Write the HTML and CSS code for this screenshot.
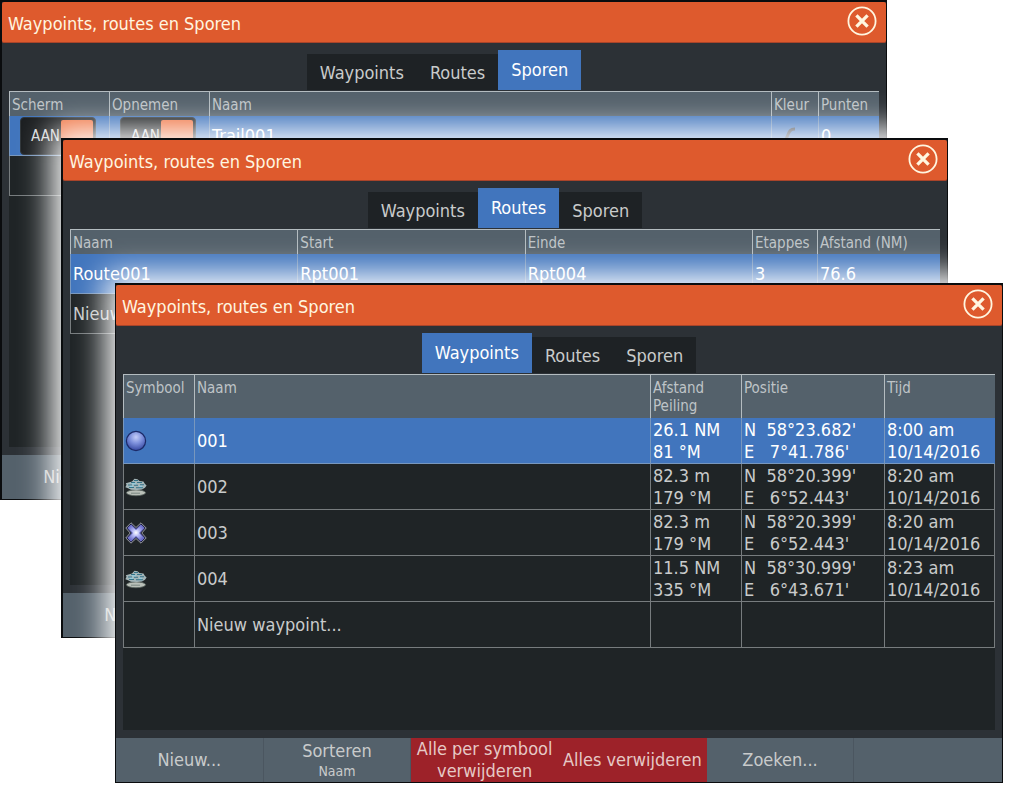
FILE: index.html
```html
<!DOCTYPE html>
<html lang="nl">
<head>
<meta charset="utf-8">
<title>Waypoints, routes en Sporen</title>
<link rel="stylesheet" href="styles.css">
</head>
<body>
<svg class="defs" aria-hidden="true">
  <defs>
    <radialGradient id="ball" cx="50%" cy="30%" r="65%">
      <stop offset="0" stop-color="#c3cdf8"/><stop offset="0.5" stop-color="#7d90dc"/><stop offset="1" stop-color="#3f51a8"/>
    </radialGradient>
    <radialGradient id="cross" cx="50%" cy="48%" r="60%">
      <stop offset="0" stop-color="#ffffff"/><stop offset="0.35" stop-color="#b9bdf5"/><stop offset="1" stop-color="#5a5cc0"/>
    </radialGradient>
    <symbol id="close" viewBox="0 0 30 30">
      <circle cx="15" cy="15" r="13.6" fill="none" stroke="#fff6e0" stroke-width="1.800"/>
      <path d="M9.400 9.400L20.600 20.600M20.600 9.400L9.400 20.600" stroke="#fff6e0" stroke-width="3.300" fill="none"/>
    </symbol>
    <symbol id="sym-ball" viewBox="0 0 24 24">
      <circle cx="12" cy="12" r="9.6" fill="url(#ball)" stroke="#1c2a68" stroke-width="1.2"/>
    </symbol>
    <symbol id="sym-reef" viewBox="0 0 24 24">
      <ellipse cx="12" cy="17.8" rx="9.6" ry="2.9" fill="#b9bfb8" stroke="#59645f" stroke-width="0.8"/>
      <path d="M8 6.500L10.500 3.800L13.500 4.200L15.500 6L19.500 6.500L20.800 8.800L22.600 10.500L21 12.800L18 14.500L13 15L7 14.800L4 13.300L1.400 12.300L2.500 9.800L1.800 8.200Z" fill="#a3b5b8"/>
      <path d="M7 7.500H11M13 7.500H18M4 10H8M10 10.200H14M16 9.700H20M5 12.500H10M12 12.700H19M10 5.500H14" stroke="#357287" stroke-width="1.100" fill="none"/>
      <path d="M8 8.800H12M15 11.300H18M6 11.300H9" stroke="#8fd3e8" stroke-width="1" fill="none"/>
      <path d="M7 18.200H16" stroke="#7c8782" stroke-width="1" fill="none"/>
    </symbol>
    <symbol id="sym-cross" viewBox="0 0 24 24">
      <path d="M7 1.800L12 6.500L17 1.800L22.200 7L17.800 12L22.200 17L17 22.200L12 17.500L7 22.200L1.800 17L6.200 12L1.800 7Z" fill="#15182c" stroke="#9a9ca2" stroke-width="1" stroke-linejoin="round"/>
      <path d="M7 3.800L12 8.500L17 3.800L20.200 7L15.600 12L20.200 17L17 20.200L12 15.500L7 20.200L3.800 17L8.400 12L3.800 7Z" fill="url(#cross)" stroke="#7476d2" stroke-width="1"/>
    </symbol>
  </defs>
</svg>
<main class="desktop">

  <section class="window window-tracks">
    <header class="titlebar">
      <h2>Waypoints, routes en Sporen</h2>
      <button class="close" type="button" aria-label="Sluiten"><svg><use href="#close"/></svg></button>
    </header>
    <nav class="tabs">
      <button type="button" class="tab">Waypoints</button>
      <button type="button" class="tab">Routes</button>
      <button type="button" class="tab active">Sporen</button>
    </nav>
    <div class="panel">
      <table class="list compact">
        <colgroup><col class="w100"><col class="w100"><col><col class="w47"><col class="w60"></colgroup>
        <thead><tr><th>Scherm</th><th>Opnemen</th><th>Naam</th><th>Kleur</th><th>Punten</th></tr></thead>
        <tbody>
          <tr class="selected">
            <td><label class="toggle">AAN<input type="checkbox" checked></label></td>
            <td><label class="toggle">AAN<input type="checkbox" checked></label></td>
            <td>Trail001</td>
            <td><svg class="trace" viewBox="0 0 24 24"><path d="M17 5C11 5 11 9 9 13C8 17 7 18 4 20" fill="none" stroke="#3c4048" stroke-width="3"/></svg></td>
            <td>0</td>
          </tr>
          <tr><td></td><td></td><td></td><td></td><td></td></tr>
        </tbody>
      </table>
    </div>
    <footer class="actions">
      <button type="button">Nieuw...</button>
    </footer>
  </section>

  <section class="window window-routes">
    <header class="titlebar">
      <h2>Waypoints, routes en Sporen</h2>
      <button class="close" type="button" aria-label="Sluiten"><svg><use href="#close"/></svg></button>
    </header>
    <nav class="tabs">
      <button type="button" class="tab">Waypoints</button>
      <button type="button" class="tab active">Routes</button>
      <button type="button" class="tab">Sporen</button>
    </nav>
    <div class="panel">
      <table class="list compact">
        <colgroup><col><col><col><col class="w65"><col class="w123"></colgroup>
        <thead><tr><th>Naam</th><th>Start</th><th>Einde</th><th>Etappes</th><th>Afstand (NM)</th></tr></thead>
        <tbody>
          <tr class="selected"><td>Route001</td><td>Rpt001</td><td>Rpt004</td><td>3</td><td>76.6</td></tr>
          <tr><td>Nieuw</td><td></td><td></td><td></td><td></td></tr>
        </tbody>
      </table>
    </div>
    <footer class="actions">
      <button type="button">Nieuw...</button>
    </footer>
  </section>

  <section class="window window-waypoints">
    <header class="titlebar">
      <h2>Waypoints, routes en Sporen</h2>
      <button class="close" type="button" aria-label="Sluiten"><svg><use href="#close"/></svg></button>
    </header>
    <nav class="tabs">
      <button type="button" class="tab active">Waypoints</button>
      <button type="button" class="tab">Routes</button>
      <button type="button" class="tab">Sporen</button>
    </nav>
    <div class="panel">
      <table class="list">
        <colgroup><col class="w71"><col><col class="w91"><col class="w143"><col class="w111"></colgroup>
        <thead><tr><th>Symbool</th><th>Naam</th><th>Afstand<br>Peiling</th><th>Positie</th><th>Tijd</th></tr></thead>
        <tbody>
          <tr class="selected">
            <td><svg class="symbol"><use href="#sym-ball"/></svg></td><td>001</td>
            <td>26.1 NM<br>81 °M</td><td class="position">N  58°23.682'<br>E   7°41.786'</td><td>8:00 am<br>10/14/2016</td>
          </tr>
          <tr>
            <td><svg class="symbol"><use href="#sym-reef"/></svg></td><td>002</td>
            <td>82.3 m<br>179 °M</td><td class="position">N  58°20.399'<br>E   6°52.443'</td><td>8:20 am<br>10/14/2016</td>
          </tr>
          <tr>
            <td><svg class="symbol"><use href="#sym-cross"/></svg></td><td>003</td>
            <td>82.3 m<br>179 °M</td><td class="position">N  58°20.399'<br>E   6°52.443'</td><td>8:20 am<br>10/14/2016</td>
          </tr>
          <tr>
            <td><svg class="symbol"><use href="#sym-reef"/></svg></td><td>004</td>
            <td>11.5 NM<br>335 °M</td><td class="position">N  58°30.999'<br>E   6°43.671'</td><td>8:23 am<br>10/14/2016</td>
          </tr>
          <tr><td></td><td>Nieuw waypoint...</td><td></td><td></td><td></td></tr>
        </tbody>
      </table>
    </div>
    <footer class="actions">
      <button type="button">Nieuw...</button>
      <button type="button">Sorteren<small>Naam</small></button>
      <button type="button" class="danger">Alle per symbool<br>verwijderen</button>
      <button type="button" class="danger">Alles verwijderen</button>
      <button type="button">Zoeken...</button>
      <span></span>
    </footer>
  </section>

</main>
</body>
</html>
```
FILE: styles.css
```css
* { box-sizing: border-box; }

body {
  margin: 0;
  background: #fff;
  color: #c9cbcb;
  font-family: "DejaVu Sans Condensed", "Noto Sans", sans-serif;
  font-size: 18px;
  line-height: 23px;
}

button {
  margin: 0;
  padding: 0;
  border: 0;
  background: none;
  color: inherit;
  font: inherit;
}

.defs { display: block; width: 0; height: 0; }

/* Overlapping windows share one grid cell; margins cascade them. */
.desktop { display: grid; align-items: start; }

.window {
  grid-area: 1 / 1;
  display: flex;
  flex-direction: column;
  min-height: 500px;
  border: 1px solid #0a0c0e;
  border-top-width: 2px;
  background: #2c3136;
  box-shadow: 0 0 30px 9px #fff;
}

.window-tracks { margin: 0 137px 0 0; border-left-width: 2px; }
.window-routes { margin: 138px 76px 0 61px; border-left-width: 2px; }
.window-waypoints { margin: 283px 21px 20px 115px; }

.titlebar {
  display: flex;
  align-items: center;
  justify-content: space-between;
  height: 41px;
  padding: 0 9px 2px 6px;
  border-bottom: 1px solid #a9442a;
  border-radius: 2px;
  background: #de5a2d;
  color: #fff6e0;
}

.titlebar h2 {
  margin: 0;
  font-size: 18px;
  font-weight: 400;
  padding-top: 5px;
}

.close, .close svg { display: block; width: 30px; height: 30px; }

.tabs {
  display: flex;
  align-items: flex-end;
  justify-content: center;
  height: 48px;
  padding-bottom: 1px;
}

.tab {
  height: 36px;
  padding: 0 13px;
  background: #1e2225;
}

.tab.active {
  height: 40px;
  padding-bottom: 1px;
  background: #4175bd;
  color: #fff;
}

.panel {
  flex: 1;
  margin: 0 7px 8px;
  background: #1f2426;
}

.list {
  width: 100%;
  table-layout: fixed;
  border-spacing: 0;
}

.list th {
  height: 44px;
  padding: 4px 0 0 2px;
  border-top: 1px solid #b4bcc0;
  border-left: 1px solid #b4bcc0;
  background: #54616b;
  color: #bfc4c7;
  font-size: 15px;
  font-weight: 400;
  line-height: 18px;
  text-align: left;
  vertical-align: top;
}

.list td {
  height: 46px;
  padding: 0 0 0 2px;
  border-left: 1px solid #777c7e;
  border-bottom: 1px solid #777c7e;
  line-height: 22px;
}

.list td:last-child { border-right: 1px solid #777c7e; }
.list .selected td { background: #4175bd; color: #fff; border-color: #7897bd; }
.list .selected td:last-child { border-right-color: #4175bd; }

.compact th { height: 25px; }
.compact td { height: 40px; }

.w47 { width: 47px; }
.w60 { width: 61px; }
.w65 { width: 65px; }
.w71 { width: 71px; }
.w91 { width: 91px; }
.w100 { width: 100px; }
.w111 { width: 111px; }
.w123 { width: 123px; }
.w143 { width: 143px; }

.position { white-space: pre; }
.symbol { display: block; width: 24px; height: 24px; margin-left: -2px; }
.trace { display: block; width: 24px; height: 24px; margin-left: 4px; }

.toggle {
  display: flex;
  align-items: center;
  justify-content: space-between;
  width: 76px;
  height: 38px;
  margin-left: 8px;
  padding: 2px 2px 2px 10px;
  border: 1px solid #30363a;
  border-radius: 4px;
  background: #1b1e20;
  color: #d8dadb;
  font-size: 15px;
}

.toggle input {
  appearance: none;
  width: 32px;
  height: 32px;
  margin: 0;
  border-radius: 2px;
  background: #ef7443;
}

.actions {
  display: grid;
  grid-template-columns: repeat(6, 1fr);
  height: 44px;
  background: #54616b;
}

.actions button {
  display: flex;
  flex-direction: column;
  align-items: center;
  justify-content: center;
  border-right: 1px solid #4b5660;
  line-height: 22px;
  white-space: nowrap;
}

.actions small { font-size: 14px; line-height: 18px; }
.actions .danger { border-color: #9d2229; background: #9d2229; color: #e6c9c6; }
```
